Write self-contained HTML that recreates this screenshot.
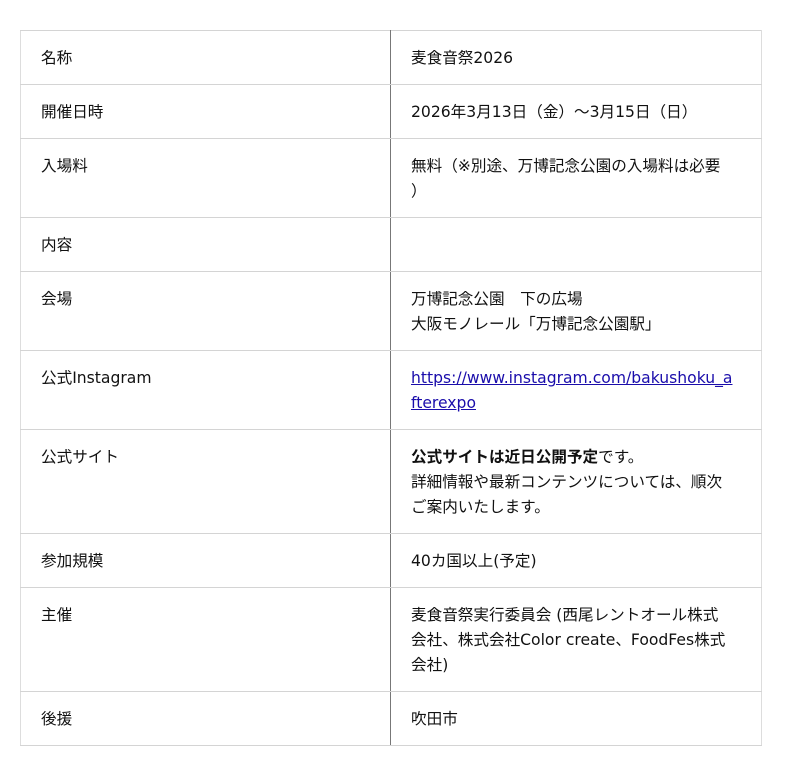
<!DOCTYPE html>
<html><head><meta charset="utf-8"><style>
html,body{margin:0;padding:0;background:#fff;}
body{width:800px;height:776px;font-family:"DejaVu Sans","Noto Sans CJK JP",sans-serif;font-size:15.6px;color:#111;}
table{position:absolute;left:20px;top:30px;border-collapse:collapse;width:742px;table-layout:fixed;}
td{border-top:1px solid #d4d4d4;border-bottom:1px solid #d4d4d4;border-left:1px solid #ddd;border-right:1px solid #ddd;vertical-align:top;padding:15px 20px 0 20px;line-height:25px;box-sizing:border-box;white-space:nowrap;overflow:visible;}
td.l{width:370px;border-right:1px solid #777;}
a{color:#1a0dab;text-decoration:underline;}
</style></head><body>
<table>
<tr style="height:54px"><td class="l">名称</td><td>麦食音祭2026</td></tr>
<tr style="height:54px"><td class="l">開催日時</td><td>2026年3月13日（金）～3月15日（日）</td></tr>
<tr style="height:79px"><td class="l">入場料</td><td>無料（※別途、万博記念公園の入場料は必要<br>）</td></tr>
<tr style="height:54px"><td class="l">内容</td><td></td></tr>
<tr style="height:79px"><td class="l">会場</td><td>万博記念公園　下の広場<br>大阪モノレール「万博記念公園駅」</td></tr>
<tr style="height:79px"><td class="l">公式Instagram</td><td><a>https://www.instagram.com/bakushoku_a<br>fterexpo</a></td></tr>
<tr style="height:104px"><td class="l">公式サイト</td><td><b>公式サイトは近日公開予定</b>です。<br>詳細情報や最新コンテンツについては、順次<br>ご案内いたします。</td></tr>
<tr style="height:54px"><td class="l">参加規模</td><td>40カ国以上(予定)</td></tr>
<tr style="height:104px"><td class="l">主催</td><td>麦食音祭実行委員会 (西尾レントオール株式<br>会社、株式会社Color create、FoodFes株式<br>会社)</td></tr>
<tr style="height:54px"><td class="l">後援</td><td>吹田市</td></tr>
</table>
</body></html>
